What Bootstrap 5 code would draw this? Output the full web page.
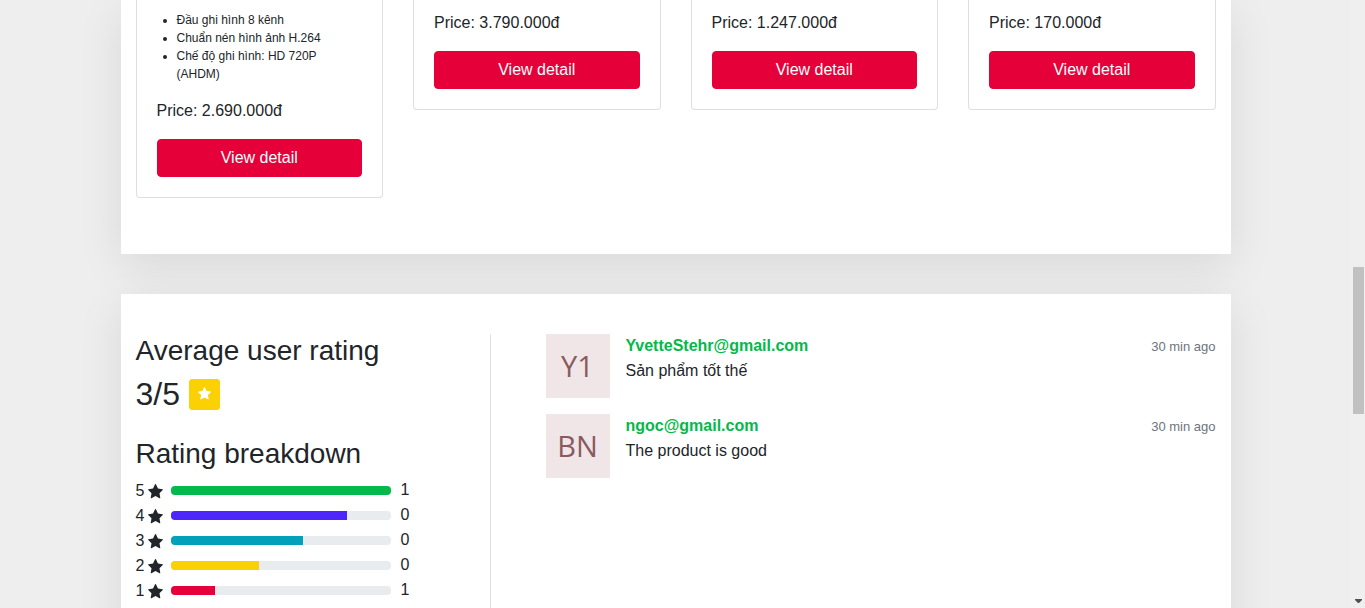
<!DOCTYPE html>
<html lang="en">
<head>
<meta charset="utf-8">
<meta name="viewport" content="width=device-width, initial-scale=1">
<title>Products and reviews</title>
<link rel="stylesheet" href="https://cdn.jsdelivr.net/npm/bootstrap@5.3.0/dist/css/bootstrap.min.css">
<style>
  :root { --red: #e60039; --green: #04b84a; --violet: #4d26fb; --teal: #02a0b9; --yellow: #fbd005; }
  body { font-family: "Liberation Sans", Arial, sans-serif; font-size: 16px; line-height: 24px; color: #212529; background: #eee; }
  .viewport { height: 100vh; overflow: hidden; }
  .page-body { min-width: 0; }
  .page-width { max-width: 1140px; padding: 0 15px; }
  .panel { background: #fff; padding: 0 15px 40px; box-shadow: 0 12px 44px rgba(0,0,0,.09); position: relative; }
  .panel-reviews { padding-top: 40px; margin-top: 40px; }
  .products { --bs-gutter-x: 30px; }
  .product { border-color: #dfdfdf; border-top: 0; border-radius: 0 0 4px 4px; margin-bottom: 16px; }
  .product .card-body { padding: 11px 20px 20px; }
  .features { font-size: 12px; line-height: 18px; padding-left: 20px; margin-bottom: 16px; }
  .btn-detail { --bs-btn-color: #fff; --bs-btn-bg: var(--red); --bs-btn-border-color: var(--red); --bs-btn-hover-color: #fff; --bs-btn-hover-bg: #c40031; --bs-btn-border-radius: 4px; }
  .reviews-row { --bs-gutter-x: 30px; }
  .summary { border-right: 1px solid #dee2e6; padding-bottom: 40px; }
  .heading { font-size: 28px; line-height: 34px; font-weight: 400; margin-bottom: 8px; }
  .score { font-size: 32px; line-height: 36px; font-weight: 400; gap: 9px; margin-bottom: 25px; }
  .btn-star { width: 31px; height: 31px; padding: 0 0 2px; --bs-btn-bg: var(--yellow); --bs-btn-border-color: var(--yellow); --bs-btn-color: #fff; --bs-btn-border-radius: 3px; }
  .star { width: 15px; height: 15px; fill: currentColor; }
  .btn-star .star { width: 13px; height: 13px; }
  .rating-line { height: 25px; }
  .rating-label { width: 35px; gap: 4px; }
  .rating-line .progress { width: 220px; height: 9px; margin-top: 7px; border-radius: 4px; background: #e9ecef; }
  .rating-count { margin: -1px 0 0 10px; }
  .fill-5 { background: var(--green); } .fill-4 { background: var(--violet); } .fill-3 { background: var(--teal); }
  .fill-2 { background: var(--yellow); } .fill-1 { background: var(--red); }
  .comments { padding-left: 40px; }
  .comment { gap: 16px; margin-bottom: 16px; }
  .avatar { width: 64px; height: 64px; background: #f0e6e7; color: #8a5a60; font: 29px/64px "Open Sans", sans-serif; }
  .author { color: var(--green); font-weight: 700; text-decoration: none; }
  .posted { font-size: 13px; color: #6c757d; }
  .scroll-track { width: 14px; padding-right: 1px; background: #efefef; }
  .scroll-thumb { width: 11px; height: 147px; margin-top: 267px; background: #c1c1c1; }
  .scroll-arrow { width: 7px; height: 4px; fill: #505050; margin: 0 2px 5px 0; }
</style>
</head>
<body>
<svg class="d-none" aria-hidden="true">
  <symbol id="star" viewBox="0 32 1664 1664"><path d="M1664 647q0 22-26 48l-363 354 86 500q1 7 1 20 0 21-10.500 35.500t-30.500 14.500q-19 0-40-12l-449-236-449 236q-22 12-40 12-21 0-31.500-14.500t-10.500-35.500q0-6 2-20l86-500-364-354q-25-27-25-48 0-37 56-46l502-73 225-455q19-41 49-41t49 41l225 455 502 73q56 9 56 46z"/></symbol>
</svg>
<div class="viewport d-flex">
  <main class="page-body flex-grow-1">
    <div class="container-fluid page-width">
      <section class="panel">
        <div class="row products align-items-start">
          <div class="col-3"><div class="card product"><div class="card-body">
            <ul class="features"><li>Đầu ghi hình 8 kênh</li><li>Chuẩn nén hình ảnh H.264</li><li>Chế độ ghi hình: HD 720P (AHDM)</li></ul>
            <p class="mb-3">Price: 2.690.000đ</p>
            <a href="#" class="btn btn-detail d-block">View detail</a>
          </div></div></div>
          <div class="col-3"><div class="card product"><div class="card-body">
            <p class="mb-3">Price: 3.790.000đ</p>
            <a href="#" class="btn btn-detail d-block">View detail</a>
          </div></div></div>
          <div class="col-3"><div class="card product"><div class="card-body">
            <p class="mb-3">Price: 1.247.000đ</p>
            <a href="#" class="btn btn-detail d-block">View detail</a>
          </div></div></div>
          <div class="col-3"><div class="card product"><div class="card-body">
            <p class="mb-3">Price: 170.000đ</p>
            <a href="#" class="btn btn-detail d-block">View detail</a>
          </div></div></div>
        </div>
      </section>

      <section class="panel panel-reviews">
        <div class="row reviews-row">
          <div class="col-4 summary">
            <h3 class="heading">Average user rating</h3>
            <h2 class="score d-flex align-items-center">3/5
              <button type="button" class="btn btn-star d-inline-flex align-items-center justify-content-center" aria-label="Rate"><svg class="star"><use href="#star"/></svg></button>
            </h2>
            <h3 class="heading">Rating breakdown</h3>
            <div class="rating-line d-flex align-items-start"><div class="rating-label d-flex align-items-center">5<svg class="star"><use href="#star"/></svg></div><div class="progress"><div class="progress-bar fill-5" style="width:100%"></div></div><div class="rating-count">1</div></div>
            <div class="rating-line d-flex align-items-start"><div class="rating-label d-flex align-items-center">4<svg class="star"><use href="#star"/></svg></div><div class="progress"><div class="progress-bar fill-4" style="width:80%"></div></div><div class="rating-count">0</div></div>
            <div class="rating-line d-flex align-items-start"><div class="rating-label d-flex align-items-center">3<svg class="star"><use href="#star"/></svg></div><div class="progress"><div class="progress-bar fill-3" style="width:60%"></div></div><div class="rating-count">0</div></div>
            <div class="rating-line d-flex align-items-start"><div class="rating-label d-flex align-items-center">2<svg class="star"><use href="#star"/></svg></div><div class="progress"><div class="progress-bar fill-2" style="width:40%"></div></div><div class="rating-count">0</div></div>
            <div class="rating-line d-flex align-items-start"><div class="rating-label d-flex align-items-center">1<svg class="star"><use href="#star"/></svg></div><div class="progress"><div class="progress-bar fill-1" style="width:20%"></div></div><div class="rating-count">1</div></div>
          </div>
          <div class="col-8">
            <ul class="comments list-unstyled">
              <li class="comment d-flex">
                <div class="avatar text-center flex-shrink-0">Y1</div>
                <div class="flex-grow-1">
                  <div class="d-flex justify-content-between align-items-baseline"><a href="#" class="author">YvetteStehr@gmail.com</a><span class="posted">30 min ago</span></div>
                  <p class="mb-0">Sản phẩm tốt thế</p>
                </div>
              </li>
              <li class="comment d-flex">
                <div class="avatar text-center flex-shrink-0">BN</div>
                <div class="flex-grow-1">
                  <div class="d-flex justify-content-between align-items-baseline"><a href="#" class="author">ngoc@gmail.com</a><span class="posted">30 min ago</span></div>
                  <p class="mb-0">The product is good</p>
                </div>
              </li>
            </ul>
          </div>
        </div>
      </section>
    </div>
  </main>
  <div class="scroll-track d-flex flex-column align-items-end justify-content-between flex-shrink-0" aria-hidden="true">
    <div class="scroll-thumb"></div>
    <svg class="scroll-arrow" viewBox="0 0 7 4"><path d="M0 0h7v1L4 4H3L0 1z"/></svg>
  </div>
</div>
<script src="https://cdn.jsdelivr.net/npm/bootstrap@5.3.0/dist/js/bootstrap.bundle.min.js"></script>
</body>
</html>
